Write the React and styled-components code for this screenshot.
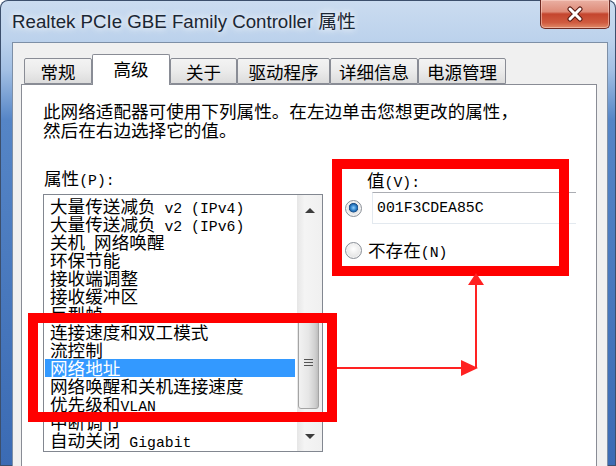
import React from 'react';
import styled, { createGlobalStyle } from 'styled-components';

const CJK = '"Noto Sans CJK SC", "Noto Sans", sans-serif';

const items = [
    '大量传送减负 v2 (IPv4)',
    '大量传送减负 v2 (IPv6)',
    '关机 网络唤醒',
    '环保节能',
    '接收端调整',
    '接收缓冲区',
    '巨型帧',
    '连接速度和双工模式',
    '流控制',
    '网络地址',
    '网络唤醒和关机连接速度',
    '优先级和VLAN',
    '中断调节',
    '自动关闭 Gigabit',
];

const tabs = [
    { label: '常规', width: 68 },
    { label: '高级', width: 78, active: true },
    { label: '关于', width: 67 },
    { label: '驱动程序', width: 93 },
    { label: '详细信息', width: 88 },
    { label: '电源管理', width: 88 },
];

// latin runs are drawn half-width, like the dialog's bitmap font
const mixed = text =>
    text.split(/([\x20-\x7e]+)/).map((part, i) =>
        /^[\x20-\x7e]+$/.test(part) ? <Lat key={i}>{part}</Lat> : part
    );

const App = () => (
    <>
        <GlobalStyle />
        <Window>
            <TitleBar>
                <Title>Realtek PCIe GBE Family Controller 属性</Title>
                <CloseButton>
                    <svg width="20" height="16" viewBox="0 0 20 16">
                        <path d="M5 3 L15 13 M15 3 L5 13" stroke="#5a1a12" strokeWidth="5" strokeLinecap="round" />
                        <path d="M5 3 L15 13 M15 3 L5 13" stroke="#fff" strokeWidth="3" strokeLinecap="round" />
                    </svg>
                </CloseButton>
            </TitleBar>
            <Body>
                <Client>
                    <TabStrip>
                        {tabs.map(tab => (
                            <Tab key={tab.label} $width={tab.width} $active={tab.active}>
                                {tab.label}
                            </Tab>
                        ))}
                    </TabStrip>
                    <Panel>
                        <Intro>
                            此网络适配器可使用下列属性。在左边单击您想更改的属性，
                            <br />
                            然后在右边选择它的值。
                        </Intro>
                        <Columns>
                            <LeftCol>
                                <FieldLabel>{mixed('属性(P):')}</FieldLabel>
                                <ListBox>
                                    <Items>
                                        {items.map(item => (
                                            <Item key={item} $selected={item === '网络地址'}>
                                                {mixed(item)}
                                            </Item>
                                        ))}
                                    </Items>
                                    <ScrollBar>
                                        <ScrollButton>
                                            <Triangle $up />
                                        </ScrollButton>
                                        <Track>
                                            <Thumb>
                                                <Grip />
                                            </Thumb>
                                        </Track>
                                        <ScrollButton>
                                            <Triangle />
                                        </ScrollButton>
                                    </ScrollBar>
                                </ListBox>
                            </LeftCol>
                            <RightCol>
                                <ValueLabel>{mixed('值(V):')}</ValueLabel>
                                <InputRow>
                                    <Radio $checked />
                                    <TextBox>001F3CDEA85C</TextBox>
                                </InputRow>
                                <RadioRow>
                                    <Radio />
                                    <span>{mixed('不存在(N)')}</span>
                                </RadioRow>
                            </RightCol>
                        </Columns>
                    </Panel>
                </Client>
            </Body>

            <RedBox $x={28} $y={313} $w={309} $h={109} />
            <RedBox $x={332} $y={159} $w={237} $h={117} />
            <Arrows width="616" height="466" viewBox="0 0 616 466">
                <path d="M337 368 H466 M476 368 V284" stroke="#f22" strokeWidth="2" fill="none" />
                <polygon points="461,360 478,368 461,376" fill="#f22" />
                <polygon points="468,285 476,273 484,285" fill="#f22" />
            </Arrows>
        </Window>
    </>
);

const GlobalStyle = createGlobalStyle`
    html, body {
        margin: 0;
        padding: 0;
        background: #fff;
        overflow: hidden;
    }
`;

const Window = styled.div`
    position: relative;
    width: 616px;
    height: 466px;
    overflow: hidden;
    display: flex;
    flex-direction: column;
    border-radius: 8px 8px 0 0;
    background: linear-gradient(180deg, #cbdcf0 0px, #bcd2ec 40px, #a3c0e4 70px, #5585c6 120px, #3b6bb4 466px);
    box-shadow: inset 0 0 0 1px #3c4f6c;
`;

const TitleBar = styled.div`
    height: 42px;
    display: flex;
    align-items: flex-start;
    flex-shrink: 0;
`;

const Title = styled.div`
    margin: 11px 0 0 12px;
    font-family: "Liberation Sans", Arial, ${CJK};
    font-size: 18.7px;
    line-height: 22px;
    color: #1b2633;
    text-shadow: 0 0 6px rgba(255, 255, 255, 0.9), 0 0 10px rgba(255, 255, 255, 0.7);
`;

const CloseButton = styled.div`
    margin: 0 6px 0 auto;
    width: 70px;
    height: 29px;
    box-sizing: border-box;
    display: flex;
    align-items: center;
    justify-content: center;
    border: 1px solid #6e2a22;
    border-top: none;
    border-radius: 0 0 5px 5px;
    background: linear-gradient(180deg, #eab0a3 0%, #de8b78 42%, #c4452e 50%, #cf5a3f 80%, #e08a68 100%);
    box-shadow: inset 0 0 0 1px rgba(255, 220, 210, 0.5);
`;

const Body = styled.div`
    flex: 1;
    display: flex;
    padding: 0 8px 0 12px;
    min-height: 0;
`;

const Client = styled.div`
    flex: 1;
    display: flex;
    flex-direction: column;
    background: #f0f0f0;
    border: 1px solid #7d8fa6;
    border-bottom: none;
    padding: 11px 10px 0 8px;
    min-height: 0;
`;

const TabStrip = styled.div`
    display: flex;
    align-items: flex-end;
    height: 30px;
    padding-left: 3px;
    flex-shrink: 0;
`;

const Tab = styled.div`
    position: relative;
    width: ${p => p.$width}px;
    height: ${p => (p.$active ? 31 : 26)}px;
    margin-bottom: ${p => (p.$active ? -1 : 0)}px;
    z-index: ${p => (p.$active ? 1 : 0)};
    box-sizing: border-box;
    border: 1px solid #898c95;
    border-bottom: ${p => (p.$active ? 'none' : '1px solid #898c95')};
    border-radius: 2px 2px 0 0;
    background: ${p => (p.$active ? '#fff' : 'linear-gradient(180deg, #f3f3f3 0%, #ebebeb 50%, #dcdcdc 100%)')};
    display: flex;
    align-items: center;
    justify-content: center;
    padding-bottom: ${p => (p.$active ? 4 : 0)}px;
    font-family: ${CJK};
    font-size: 17.5px;
    color: #000;
`;

const Panel = styled.div`
    flex: 1;
    background: #fff;
    border: 1px solid #898c95;
    border-bottom: none;
    padding: 16px 20px 0 21px;
    font-family: ${CJK};
    font-size: 17.6px;
    color: #000;
`;

const Intro = styled.div`
    line-height: 19px;
    white-space: nowrap;
`;

const Columns = styled.div`
    display: grid;
    grid-template-columns: 280px 1fr;
    column-gap: 22px;
    margin-top: 29px;
    align-items: start;
`;

const LeftCol = styled.div`
    display: flex;
    flex-direction: column;
`;

const FieldLabel = styled.div`
    height: 19px;
    line-height: 19px;
    margin-left: 1px;
    white-space: nowrap;
`;

const Lat = styled.span`
    font-family: "Liberation Mono", "DejaVu Sans Mono", monospace;
    font-size: 14.8px;
    line-height: 0;
`;

const ListBox = styled.div`
    margin-top: 7px;
    height: 258px;
    box-sizing: border-box;
    border: 1px solid #828790;
    display: flex;
    background: #fff;
`;

const Items = styled.div`
    flex: 1;
    padding: 2px 2px 0 1px;
    overflow: hidden;
`;

const Item = styled.div`
    height: 18px;
    line-height: 18px;
    padding-left: 5px;
    white-space: nowrap;
    background: ${p => (p.$selected ? '#3399ff' : 'transparent')};
    color: ${p => (p.$selected ? '#fff' : '#000')};
`;

const ScrollBar = styled.div`
    width: 25px;
    display: flex;
    flex-direction: column;
    background: linear-gradient(90deg, #e6e6e6 0%, #f4f4f4 30%, #f0f0f0 100%);
`;

const ScrollButton = styled.div`
    height: 30px;
    display: flex;
    align-items: center;
    justify-content: center;
    flex-shrink: 0;
`;

const Triangle = styled.div`
    width: 0;
    height: 0;
    border-left: 5px solid transparent;
    border-right: 5px solid transparent;
    border-bottom: ${p => (p.$up ? '5px solid #3c3c3c' : 'none')};
    border-top: ${p => (p.$up ? 'none' : '5px solid #3c3c3c')};
`;

const Track = styled.div`
    flex: 1;
    display: flex;
    flex-direction: column;
`;

const Thumb = styled.div`
    margin: 92px 3px 0 1px;
    height: 92px;
    box-sizing: border-box;
    border: 1px solid #a4a4a4;
    border-radius: 3px;
    background: linear-gradient(90deg, #f2f2f2 0%, #e6e6e6 50%, #cfcfcf 85%, #bdbdbd 100%);
    display: flex;
    align-items: center;
    justify-content: center;
`;

const Grip = styled.div`
    width: 9px;
    height: 8px;
    background: repeating-linear-gradient(180deg, #555 0px, #555 1px, transparent 1px, transparent 3px);
`;

const RightCol = styled.div`
    display: flex;
    flex-direction: column;
    padding-top: 2px;
`;

const ValueLabel = styled.div`
    height: 19px;
    line-height: 19px;
    margin-left: 22px;
`;

const InputRow = styled.div`
    display: flex;
    align-items: center;
    gap: 10px;
    margin-top: 3px;
    height: 32px;
`;

const Radio = styled.div`
    width: 17px;
    height: 17px;
    flex-shrink: 0;
    box-sizing: border-box;
    border-radius: 50%;
    border: 1px solid #8a8f97;
    background: ${p =>
        p.$checked
            ? 'radial-gradient(circle at 50% 45%, #8fd0ff 0px, #2a7bc4 3px, #1d4f86 4.5px, #e6e6e6 5px, #f8f8f8 100%)'
            : 'radial-gradient(circle at 50% 40%, #ffffff 0%, #e8e8e8 60%, #d4d4d4 100%)'};
    box-shadow: inset 0 0 0 1px #f4f4f4;
`;

const TextBox = styled.div`
    flex: 1;
    height: 32px;
    box-sizing: border-box;
    border: 1px solid #e3e9ef;
    border-top-color: #abadb3;
    border-right: none;
    padding-left: 4px;
    display: flex;
    align-items: center;
    font-family: "Liberation Mono", monospace;
    font-size: 14.8px;
    color: #000;
    background: #fff;
`;

const RadioRow = styled.div`
    display: flex;
    align-items: center;
    gap: 6px;
    margin-top: 16px;
    height: 20px;
    line-height: 20px;
`;

const RedBox = styled.div`
    position: absolute;
    left: ${p => p.$x}px;
    top: ${p => p.$y}px;
    width: ${p => p.$w}px;
    height: ${p => p.$h}px;
    box-sizing: border-box;
    border: 10px solid #ff0000;
    pointer-events: none;
`;

const Arrows = styled.svg`
    position: absolute;
    left: 0;
    top: 0;
    pointer-events: none;
`;

export default App;
